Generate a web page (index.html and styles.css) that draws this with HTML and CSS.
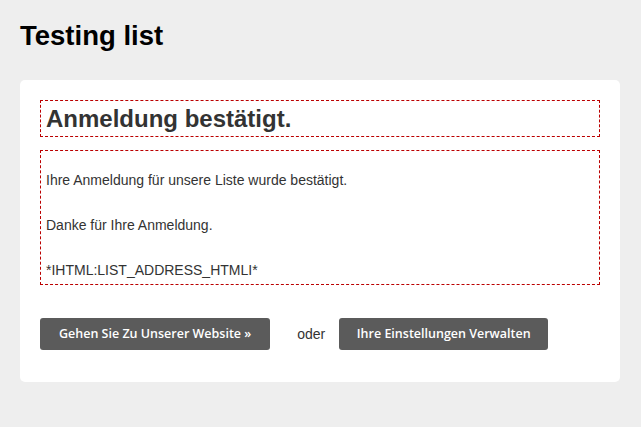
FILE: index.html
```html
<!DOCTYPE html>
<html lang="de">
<head>
<meta charset="utf-8">
<title>Testing list</title>
<link rel="stylesheet" href="styles.css">
</head>
<body>
<div class="page">
  <h1 class="title">Testing list</h1>
  <div class="card">
    <div class="box box-heading">
      <h2 class="heading">Anmeldung bestätigt.</h2>
    </div>
    <div class="box box-content">
      <p class="text">Ihre Anmeldung für unsere Liste wurde bestätigt.<br><br>Danke für Ihre Anmeldung.<br><br>*IHTML:LIST_ADDRESS_HTMLI*</p>
    </div>
    <div class="actions">
      <a class="btn btn-primary" href="#">Gehen Sie Zu Unserer Website »</a>
      <span class="or">oder</span>
      <a class="btn" href="#">Ihre Einstellungen Verwalten</a>
    </div>
  </div>
</div>
</body>
</html>
```

FILE: styles.css
```css
html, body {
  margin: 0;
  padding: 0;
  background: #eeeeee;
}
body {
  font-family: "Liberation Sans", Arial, Helvetica, sans-serif;
  color: #333;
}
.page {
  padding: 0 21px 0 20px;
}
.title {
  margin: 0;
  padding-top: 18px;
  height: 80px;
  box-sizing: border-box;
  font-size: 27.5px;
  line-height: 36px;
  font-weight: bold;
  color: #000;
}
.card {
  background: #fff;
  border-radius: 5px;
  padding: 20px 20px 32px 20px;
}
.box {
  border: 1px dashed #bb0000;
  padding: 3px 5px;
}
.box-heading {
  margin-bottom: 13px;
}
.heading {
  margin: 0;
  font-size: 24px;
  line-height: 29px;
  font-weight: bold;
  color: #333;
}
.box-content {
  padding: 4px 5px 3px;
}
.text {
  margin: 14px 0 0;
  font-size: 14px;
  line-height: 22.4px;
}
.actions {
  display: flex;
  align-items: center;
  margin-top: 33px;
}
.btn {
  display: block;
  height: 32px;
  line-height: 32px;
  padding: 0 17.5px;
  background: #5b5b5b;
  color: #fff;
  border-radius: 3px;
  font-family: "Open Sans", sans-serif;
  font-weight: 600;
  font-size: 12.5px;
  text-decoration: none;
  white-space: nowrap;
}
.btn-primary {
  padding: 0 19px;
}
.or {
  font-size: 14px;
  margin: 0 14px 0 27px;
}
```
